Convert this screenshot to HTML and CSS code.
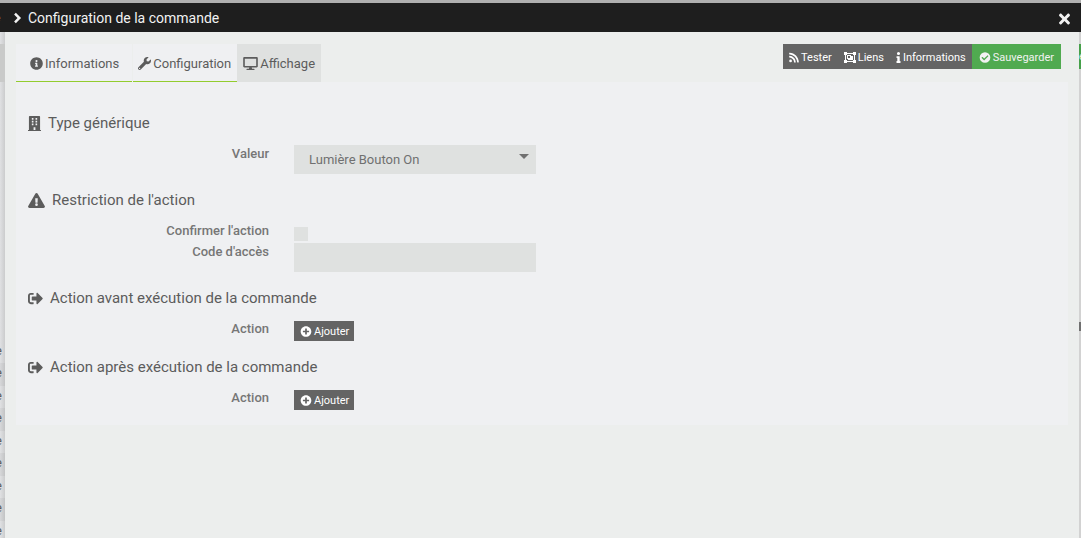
FILE: index.html
```html
<!DOCTYPE html>
<html lang="fr">

<head>
    <meta charset="UTF-8">
    <meta name="viewport" content="width=device-width, initial-scale=1.0">
    <title>Configuration de la commande</title>
    <link rel="stylesheet" href="styles.css">
</head>

<body>
    <!-- Icons -->
    <svg class="sprite" aria-hidden="true">
        <symbol id="i-chevron" viewBox="0 0 320 512"><path d="M90 30L310 256L90 482L15 410L160 256L15 102z"/></symbol>
        <symbol id="i-close" viewBox="0 0 352 512"><path d="M242.7 256l100-100c12.300-12.300 12.300-32.200 0-44.500l-22.200-22.200c-12.300-12.300-32.200-12.300-44.500 0L176 189.300 75.900 89.200c-12.300-12.300-32.200-12.300-44.500 0L9.200 111.500c-12.300 12.300-12.300 32.200 0 44.500l100 100L9.200 356c-12.300 12.300-12.300 32.200 0 44.500l22.200 22.200c12.300 12.300 32.200 12.300 44.500 0l100.100-100 100 100c12.300 12.300 32.200 12.300 44.500 0l22.200-22.200c12.300-12.300 12.300-32.200 0-44.500z"/></symbol>
        <symbol id="i-info-circle" viewBox="0 0 512 512"><path d="M256 8C119 8 8 119 8 256s111 248 248 248 248-111 248-248S393 8 256 8zm0 110a42 42 0 1 1 0 84 42 42 0 0 1 0-84zm56 254c0 6.600-5.400 12-12 12h-88c-6.600 0-12-5.400-12-12v-24c0-6.600 5.400-12 12-12h12v-64h-12c-6.600 0-12-5.400-12-12v-24c0-6.600 5.400-12 12-12h64c6.600 0 12 5.400 12 12v100h12c6.600 0 12 5.400 12 12z"/></symbol>
        <symbol id="i-wrench" viewBox="0 0 512 512"><path d="M507.730 109.100c-2.240-9.030-13.540-12.090-20.120-5.510l-74.360 74.360-67.880-11.310-11.310-67.880 74.360-74.360c6.620-6.620 3.430-17.900-5.660-20.160-47.380-11.740-99.550.91-136.580 37.930-39.640 39.640-50.550 97.100-34.050 147.200L18.740 402.760c-24.990 24.990-24.990 65.510 0 90.500 24.990 24.990 65.510 24.990 90.500 0l213.210-213.210c50.120 16.710 107.470 5.680 147.370-34.220 37.070-37.070 49.700-89.320 37.910-136.730zM64 472a24 24 0 1 1 0-48 24 24 0 0 1 0 48z"/></symbol>
        <symbol id="i-desktop" viewBox="0 0 576 512"><path d="M528 0H48C21.500 0 0 21.500 0 48v320c0 26.500 21.500 48 48 48h192l-16 48h-72c-13.300 0-24 10.700-24 24s10.700 24 24 24h272c13.300 0 24-10.700 24-24s-10.700-24-24-24h-72l-16-48h192c26.500 0 48-21.500 48-48V48c0-26.500-21.500-48-48-48zm-16 352H64V64h448v288z"/></symbol>
        <symbol id="i-rss" viewBox="0 0 448 512"><path d="M128 416a64 64 0 1 1-128 0 64 64 0 0 1 128 0zm175.700 47.300C295.300 309.600 172.300 186.500 18.700 178.100 8.600 177.500 0 185.600 0 195.700v48.100c0 8.800 6.800 16.200 15.600 16.800C129.300 268 220 358.700 227.400 472.400c.6 8.800 8 15.600 16.800 15.600h48.100c10.100 0 18.200-8.600 17.600-18.700zM448 463.300C439.600 229.700 252.100 40.400 18.100 32 8.200 31.600 0 39.600 0 49.600v48.100c0 9.500 7.500 17.100 16.900 17.600 190.500 8.700 343.200 161.500 351.900 351.900.4 9.400 8.100 16.900 17.500 16.900h44.100c10 0 18-10.200 17.600-20.800z"/></symbol>
        <symbol id="i-group" viewBox="0 0 12 11"><path fill-rule="evenodd" d="M0 0h3v1h6V0h3v3h-1v5h1v3H9v-1H3v1H0V8h1V3H0zm3 2v1H2v5h1v1h6V8h1V3H9V2zM3 3h4v1h2v4H4V7H3zm1 1v2h2V4z"/></symbol>
        <symbol id="i-info" viewBox="0 0 192 512"><path d="M20 424h20V280H20c-11 0-20-9-20-20v-48c0-11 9-20 20-20h112c11 0 20 9 20 20v212h20c11 0 20 9 20 20v48c0 11-9 20-20 20H20c-11 0-20-9-20-20v-48c0-11 9-20 20-20zM96 0a72 72 0 1 1 0 144A72 72 0 0 1 96 0z"/></symbol>
        <symbol id="i-check-circle" viewBox="0 0 512 512"><path d="M504 256a248 248 0 1 1-496 0 248 248 0 0 1 496 0zM227.300 387.300l184-184c6.200-6.200 6.200-16.400 0-22.600l-22.600-22.600c-6.200-6.200-16.400-6.200-22.600 0L216 308.100l-70.100-70.100c-6.200-6.200-16.400-6.200-22.600 0l-22.600 22.600c-6.200 6.200-6.200 16.400 0 22.600l104 104c6.200 6.300 16.400 6.300 22.600.1z"/></symbol>
        <symbol id="i-plus-circle" viewBox="0 0 512 512"><path d="M256 8C119 8 8 119 8 256s111 248 248 248 248-111 248-248S393 8 256 8zm144 276c0 6.600-5.400 12-12 12h-92v92c0 6.600-5.400 12-12 12h-56c-6.600 0-12-5.400-12-12v-92h-92c-6.600 0-12-5.400-12-12v-56c0-6.600 5.400-12 12-12h92v-92c0-6.600 5.400-12 12-12h56c6.600 0 12 5.400 12 12v92h92c6.600 0 12 5.400 12 12z"/></symbol>
        <symbol id="i-building" viewBox="0 0 448 512"><path fill-rule="evenodd" d="M436 480h-20V24c0-13-11-24-24-24H56C43 0 32 11 32 24v456H12c-7 0-12 5-12 12v20h448v-20c0-7-5-12-12-12zM132 68h56v56h-56zm128 0h56v56h-56zM132 164h56v56h-56zm128 0h56v56h-56zM132 260h56v56h-56zm128 0h56v56h-56zM192 388h64v92h-64z"/></symbol>
        <symbol id="i-warning" viewBox="0 0 576 512"><path d="M569.500 440C588 472 564.800 512 527.900 512H48.100c-37 0-60-40-41.600-72L246.400 24c18.500-32 64.700-32 83.200 0zM288 354a46 46 0 1 0 0 92 46 46 0 0 0 0-92zm-43.700-165.300l7.400 136c.4 6.300 5.700 11.300 12 11.300h48.600c6.300 0 11.600-5 12-11.300l7.400-136c.4-6.900-5.100-12.700-12-12.700h-63.400c-6.900 0-12.400 5.800-12 12.700z"/></symbol>
        <symbol id="i-exit" viewBox="0 0 512 512"><path d="M497 273L329 441c-15 15-41 4.500-41-17v-96H152c-13.300 0-24-10.700-24-24v-96c0-13.300 10.700-24 24-24h136V88c0-21.400 25.900-32 41-17l168 168c9.300 9.400 9.300 24.600 0 34zM192 436v-40c0-6.600-5.400-12-12-12H96c-17.700 0-32-14.300-32-32V160c0-17.700 14.300-32 32-32h84c6.600 0 12-5.400 12-12V76c0-6.600-5.400-12-12-12H96c-53 0-96 43-96 96v192c0 53 43 96 96 96h84c6.600 0 12-5.400 12-12z"/></symbol>
    </svg>

    <!-- Page under the dialog -->
    <div class="backdrop" aria-hidden="true">
        <div class="backdrop-tab"></div>
        <ul class="backdrop-rows">
            <li>e</li>
            <li>e</li>
            <li>e</li>
            <li>e</li>
            <li>e</li>
            <li>e</li>
            <li>e</li>
            <li>e</li>
            <li>e</li>
        </ul>
        <div class="backdrop-button">e</div>
        <div class="backdrop-mark"></div>
    </div>

    <div class="dialog" role="dialog" aria-labelledby="dialogTitle">
        <header class="dialog-header">
            <span class="backdrop-link" aria-hidden="true">e</span>
            <svg class="icon chevron"><use href="#i-chevron"/></svg>
            <h1 id="dialogTitle">Configuration de la commande</h1>
            <button type="button" class="close-button" aria-label="Fermer"><svg class="icon"><use href="#i-close"/></svg></button>
        </header>

        <main class="dialog-body">
            <div class="top-bar">
                <nav class="tabs">
                    <a href="#informations"><svg class="icon"><use href="#i-info-circle"/></svg>Informations</a>
                    <a href="#configuration"><svg class="icon"><use href="#i-wrench"/></svg>Configuration</a>
                    <a href="#affichage" class="active"><svg class="icon wide"><use href="#i-desktop"/></svg>Affichage</a>
                </nav>
                <div class="actions">
                    <button type="button"><svg class="icon rss"><use href="#i-rss"/></svg>Tester</button>
                    <button type="button"><svg class="icon"><use href="#i-group"/></svg>Liens</button>
                    <button type="button"><svg class="icon thin"><use href="#i-info"/></svg>Informations</button>
                    <button type="button" class="save"><svg class="icon"><use href="#i-check-circle"/></svg>Sauvegarder</button>
                </div>
            </div>

            <form class="panel" id="affichage">
                <section>
                    <h2><svg class="icon building"><use href="#i-building"/></svg>Type générique</h2>
                    <div class="row">
                        <label for="genericType">Valeur</label>
                        <div class="select-box">
                            <select id="genericType">
                                <option>Lumière Bouton On</option>
                            </select>
                        </div>
                    </div>
                </section>

                <section>
                    <h2><svg class="icon warning"><use href="#i-warning"/></svg>Restriction de l'action</h2>
                    <div class="row">
                        <label for="confirmAction">Confirmer l'action</label>
                        <input type="checkbox" id="confirmAction">
                    </div>
                    <div class="row">
                        <label for="accessCode">Code d'accès</label>
                        <input type="password" id="accessCode">
                    </div>
                </section>

                <section>
                    <h2><svg class="icon"><use href="#i-exit"/></svg>Action avant exécution de la commande</h2>
                    <div class="row">
                        <label for="addBefore">Action</label>
                        <button type="button" id="addBefore" class="add-button"><svg class="icon"><use href="#i-plus-circle"/></svg>Ajouter</button>
                    </div>
                </section>

                <section>
                    <h2><svg class="icon"><use href="#i-exit"/></svg>Action après exécution de la commande</h2>
                    <div class="row">
                        <label for="addAfter">Action</label>
                        <button type="button" id="addAfter" class="add-button"><svg class="icon"><use href="#i-plus-circle"/></svg>Ajouter</button>
                    </div>
                </section>
            </form>
        </main>
    </div>
</body>

</html>
```
FILE: styles.css
```css
* {
    box-sizing: border-box;
}

body, h1, h2, ul {
    margin: 0;
    padding: 0;
}

body {
    min-height: 100vh;
    display: flex;
    flex-direction: column;
    padding-top: 3px;
    font-family: Roboto, sans-serif;
    font-size: 13px;
    line-height: 20px;
    color: #5c5c5c;
    background-color: #b0b0b0;
}

button, input, select {
    font-family: inherit;
    border: none;
    border-radius: 0;
    margin: 0;
}

button {
    display: flex;
    align-items: center;
    cursor: pointer;
}

.sprite {
    position: absolute;
    width: 0;
    height: 0;
}

.icon {
    width: 13px;
    height: 13px;
    fill: currentColor;
    flex-shrink: 0;
}

/* Page under the dialog */
.backdrop {
    position: fixed;
    inset: 32px 0 0 0;
    overflow: hidden;
    background: linear-gradient(to right, #e0e1e3 0, #cbcccd 5px, #d2d2d2 6px);
}

.backdrop-tab {
    position: absolute;
    top: 12px;
    left: 0;
    width: 5px;
    height: 38px;
    background-color: #c9cac9;
}

.backdrop-rows {
    position: absolute;
    top: 309px;
    left: 0;
    width: 5px;
    list-style: none;
}

.backdrop-rows li {
    display: flex;
    justify-content: flex-end;
    height: 22px;
    padding-right: 3px;
    overflow: hidden;
}

.backdrop-rows li:nth-child(even) {
    height: 23px;
    background-color: rgba(0, 0, 0, 0.04);
}

.backdrop-button {
    position: absolute;
    top: 12px;
    right: 0;
    width: 2px;
    height: 25px;
    overflow: hidden;
    font-size: 11px;
    line-height: 25px;
    color: #d9ecd9;
    background-color: #46a04a;
}

.backdrop-mark {
    position: absolute;
    top: 290px;
    right: 0;
    width: 2px;
    height: 9px;
    background-color: #707070;
}

.backdrop-link {
    position: absolute;
    left: 0;
    display: flex;
    justify-content: flex-end;
    width: 1px;
    overflow: hidden;
    color: #c8501e;
}

/* Dialog */
.dialog {
    position: relative;
    flex: 1;
    display: flex;
    flex-direction: column;
}

.dialog-header {
    display: flex;
    align-items: center;
    height: 29px;
    padding: 0 10px 0 13px;
    color: #f2f2f2;
    background-color: #1e1e1e;
}

.dialog-header h1 {
    margin-left: 6px;
    font-size: 14px;
    font-weight: 400;
}

.dialog-header .chevron {
    width: 9px;
    height: 12px;
}

.close-button {
    margin-left: auto;
    padding: 2px 0 0;
    color: #f2f2f2;
    background: none;
}

.close-button .icon {
    height: 16px;
}

.dialog-body {
    flex: 1;
    margin: 0 2px 0 5px;
    padding: 12px 11px;
    background-color: #eceeed;
}

.top-bar {
    display: flex;
    justify-content: space-between;
    align-items: flex-start;
}

.tabs {
    display: flex;
}

.tabs a {
    display: flex;
    align-items: center;
    gap: 2px;
    height: 38px;
    padding: 2px 6px 0 5px;
    color: #5c5c5c;
    text-decoration: none;
    background-color: #eff0f2;
    border-bottom: 1px solid #93cc2e;
}

.tabs a:first-child {
    padding: 2px 13px 0 14px;
    margin-right: 1px;
}

.tabs a.active {
    padding: 2px 6px 0;
    background-color: #dfe1e0;
    border-bottom-color: #dfe1e0;
}

.tabs .wide {
    width: 15px;
}

.actions {
    display: flex;
    margin-right: 7px;
}

.actions button {
    gap: 2px;
    height: 25px;
    padding: 2px 6px 0;
    font-size: 11px;
    color: #fff;
    background-color: #646464;
}

.actions .icon,
.add-button .icon {
    width: 12px;
    height: 11px;
}

.actions .thin {
    width: 5px;
}

.actions .rss {
    width: 10px;
}

.actions .save {
    padding: 2px 7px 0;
    color: #f2f2f2;
    background-color: #50aa50;
}

/* Form */
.panel {
    padding: 30px 12px 0;
    background-color: #eff0f2;
}

.panel section {
    padding-bottom: 15px;
}

.panel h2 {
    display: flex;
    align-items: center;
    gap: 7px;
    height: 22px;
    margin-bottom: 11px;
    font-size: 15px;
    font-weight: 400;
}

.panel h2 .icon {
    width: 15px;
    height: 15px;
}

.panel h2 .building {
    width: 13px;
}

.panel h2 .warning {
    width: 17px;
}

.row {
    display: grid;
    grid-template-columns: 241px 242px;
    column-gap: 25px;
    align-items: start;
    justify-items: start;
}

.row label {
    justify-self: end;
    line-height: 18px;
    font-weight: 500;
    color: #767676;
}

.select-box {
    position: relative;
    width: 100%;
}

.select-box::after {
    content: "";
    position: absolute;
    top: 9px;
    right: 7px;
    border: 5px solid transparent;
    border-top-color: #707070;
    border-bottom: none;
    pointer-events: none;
}

select,
input[type="password"] {
    display: block;
    width: 100%;
    height: 29px;
    padding: 0 15px;
    font-size: 13px;
    color: #707070;
    background-color: #dfe1e0;
    appearance: none;
}

input[type="checkbox"] {
    width: 14px;
    height: 14px;
    margin: 5px 0 2px;
    background-color: #dfe1e0;
    appearance: none;
}

input[type="checkbox"]:checked {
    background-color: #93cc2e;
}

.add-button {
    gap: 2px;
    height: 20px;
    margin-top: 1px;
    padding: 0 5px 0 6px;
    font-size: 11px;
    color: #fff;
    background-color: #646464;
}
```
